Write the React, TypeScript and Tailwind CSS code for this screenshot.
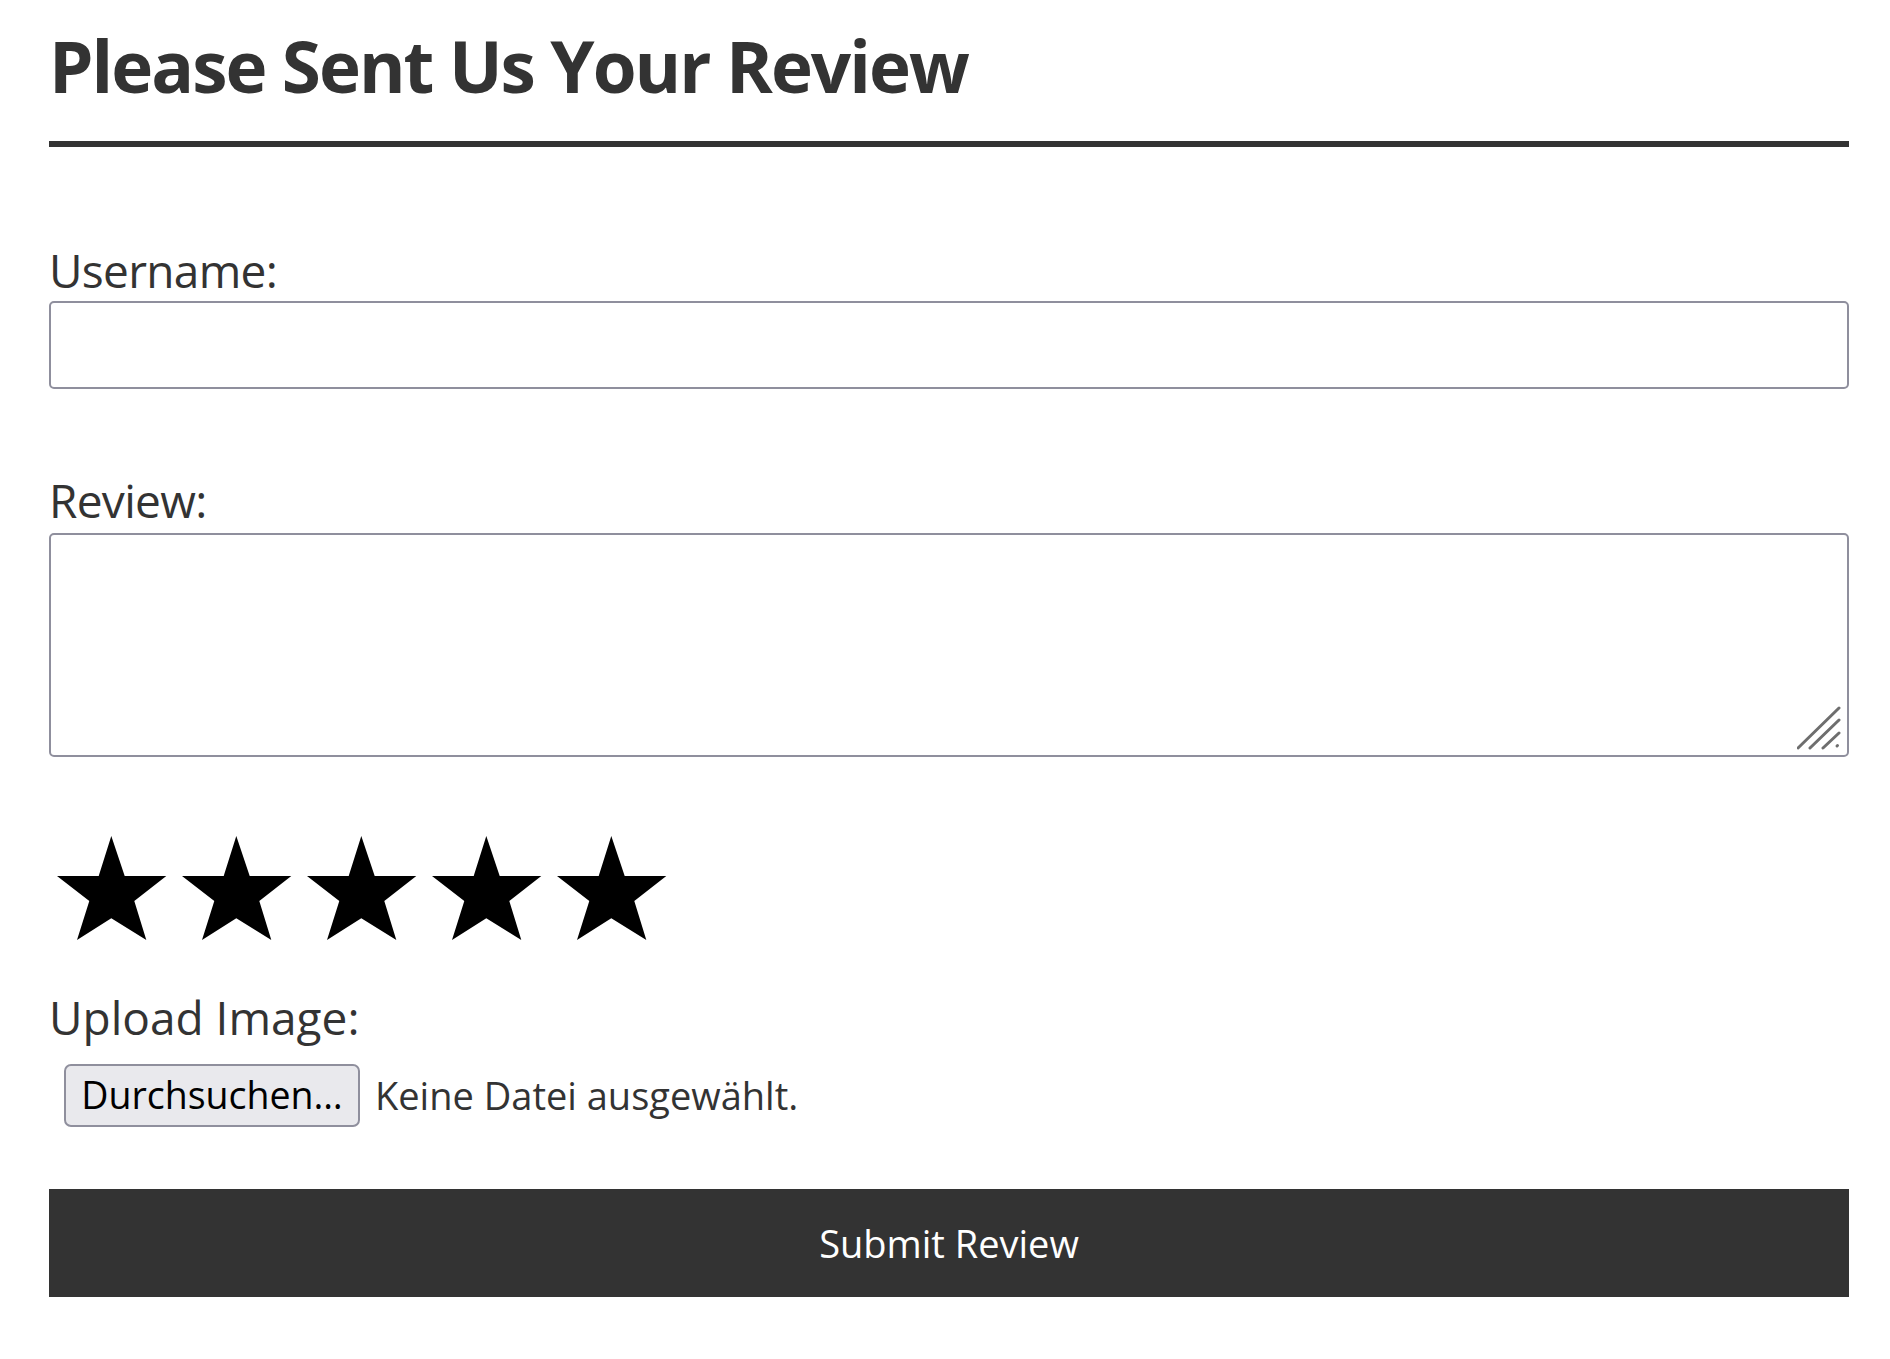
import React from "react";

const Star = () => (
  <svg width="110" height="104" viewBox="0 0 110 104" className="block shrink-0">
    <polygon
      points="54.3,0 67.7,40 109.3,40 77.3,65 89.3,104 54.3,82.3 20,104 32.3,65 0,40 41.7,40"
      fill="#000"
    />
  </svg>
);

export default function App() {
  return (
    <div className="min-h-[1359px] bg-white">
      <div className="ml-[49px] w-[1800px] flex flex-col text-[#333] font-['Open_Sans',sans-serif]">
        <h1 className="mt-[30px] h-[71px] text-[71px] leading-[71px] font-bold whitespace-nowrap tracking-[-0.028em]">
          Please Sent Us Your Review
        </h1>
        <div className="mt-[40px] h-[6px] bg-[#333]" />

        <label className="mt-[100px] h-[46px] text-[46px] leading-[46px] whitespace-nowrap tracking-[-0.015em]">
          Username:
        </label>
        <input
          type="text"
          className="mt-[8px] h-[88px] w-full rounded-[5px] border-2 border-[#8f8f9d] bg-white outline-none"
        />

        <label className="mt-[88px] h-[46px] text-[46px] leading-[46px] whitespace-nowrap tracking-[-0.015em]">
          Review:
        </label>
        <div className="relative mt-[10px] h-[224px]">
          <textarea className="block h-full w-full resize-none rounded-[5px] border-2 border-[#8f8f9d] bg-white outline-none" />
          <svg
            width="44"
            height="44"
            viewBox="0 0 44 44"
            className="pointer-events-none absolute right-[8px] bottom-[7px]"
          >
            <g stroke="#6e6e6e" strokeWidth="3" strokeLinecap="round">
              <line x1="42" y1="2" x2="1" y2="42" />
              <line x1="42" y1="14" x2="13" y2="42" />
              <line x1="42" y1="27" x2="26" y2="42" />
              <line x1="40.5" y1="39.5" x2="40" y2="40" />
            </g>
          </svg>
        </div>

        <div className="mt-[79px] ml-[8px] flex h-[104px] gap-[15px]">
          <Star />
          <Star />
          <Star />
          <Star />
          <Star />
        </div>

        <label className="mt-[54px] h-[46px] text-[46px] leading-[46px] whitespace-nowrap">
          Upload Image:
        </label>
        <div className="mt-[24px] flex h-[63px] items-center">
          <button
            type="button"
            className="ml-[15px] flex h-[63px] w-[296px] items-center justify-center rounded-[7px] border-2 border-[#8f8f9d] bg-[#e9e9ed] text-[37.5px] text-black whitespace-nowrap"
          >
            Durchsuchen…
          </button>
          <span className="ml-[15px] text-[38px] text-[#333] whitespace-nowrap">
            Keine Datei ausgewählt.
          </span>
        </div>

        <button
          type="button"
          className="mt-[62px] flex h-[108px] w-full items-center justify-center bg-[#333] text-[38px] text-white"
        >
          Submit Review
        </button>
      </div>
    </div>
  );
}
